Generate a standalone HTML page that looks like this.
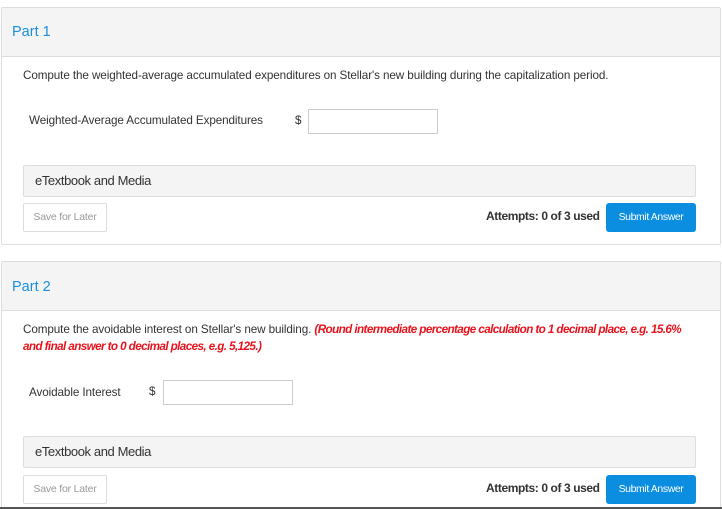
<!DOCTYPE html>
<html><head><style>
html,body{margin:0;width:722px;height:509px;overflow:hidden}
body{background:#fff;font-family:"Liberation Sans",sans-serif;position:relative;color:#333}
.a{position:absolute;white-space:nowrap}
.card{position:absolute;left:1px;width:718px;border:1px solid #ddd;border-radius:2px;background:#fff}
.hd{position:absolute;left:0;top:0;right:0;height:48px;background:#f4f4f4;border-bottom:1px solid #ddd}
.pt{color:#1a8fe0;font-size:14.5px}
.t{font-size:11.7px;letter-spacing:-0.1px}
.inp{position:absolute;border:1px solid #ccc;background:#fff;height:23px;width:128px}
.bar{position:absolute;left:23px;width:671px;height:30px;background:#f4f4f4;border:1px solid #ddd;border-radius:2px}
.bar span{position:absolute;left:11px;top:7px;font-size:13px;letter-spacing:-0.4px;color:#333}
.save{position:absolute;left:23px;width:82px;height:27px;border:1px solid #ddd;border-radius:2px;background:#fff;color:#999;font-size:10.5px;letter-spacing:-0.2px;text-align:center;line-height:27px}
.sub{position:absolute;left:606px;width:90px;height:29px;border-radius:3px;background:#0b8de0;color:#fff;font-size:10.5px;letter-spacing:-0.4px;text-align:center;line-height:29px}
.att{font-size:12px;font-weight:bold;letter-spacing:-0.4px;color:#333}
.red{color:#e8131d;font-style:italic;font-weight:bold;letter-spacing:-0.6px}
</style></head><body>
<div class="card" style="top:7px;height:236px"><div class="hd"></div></div>
<div class="a pt" style="left:12px;top:24px">Part 1</div>
<div class="a t" style="left:23px;top:69px">Compute the weighted-average accumulated expenditures on Stellar's new building during the capitalization period.</div>
<div class="a t" style="left:29px;top:114px">Weighted-Average Accumulated Expenditures</div>
<div class="a t" style="left:295px;top:114px">$</div>
<div class="inp" style="left:308px;top:109px"></div>
<div class="bar" style="top:165px"><span>eTextbook and Media</span></div>
<div class="save" style="top:203px">Save for Later</div>
<div class="a att" style="left:486px;top:209px">Attempts: 0 of 3 used</div>
<div class="sub" style="top:203px">Submit Answer</div>

<div class="card" style="top:261px;height:250px"><div class="hd"></div></div>
<div class="a pt" style="left:12px;top:279px">Part 2</div>
<div class="a t" style="left:23px;top:323px">Compute the avoidable interest on Stellar's new building. <span class="red">(Round intermediate percentage calculation to 1 decimal place, e.g. 15.6%</span></div>
<div class="a t red" style="left:23px;top:340px">and final answer to 0 decimal places, e.g. 5,125.)</div>
<div class="a t" style="left:29px;top:386px">Avoidable Interest</div>
<div class="a t" style="left:149px;top:385px">$</div>
<div class="inp" style="left:163px;top:380px"></div>
<div class="bar" style="top:436px"><span>eTextbook and Media</span></div>
<div class="save" style="top:475px">Save for Later</div>
<div class="a att" style="left:486px;top:481px">Attempts: 0 of 3 used</div>
<div class="sub" style="top:475px">Submit Answer</div>
<div class="a" style="left:0;top:507px;width:722px;height:2px;background:#555"></div>
</body></html>
